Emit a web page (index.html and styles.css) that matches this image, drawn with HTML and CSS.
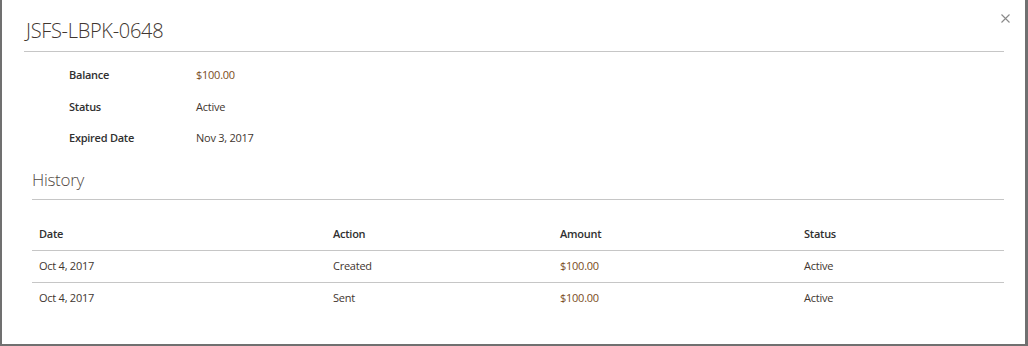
FILE: index.html
```html
<!DOCTYPE html>
<html lang="en">
<head>
    <meta charset="UTF-8">
    <meta name="viewport" content="width=device-width, initial-scale=1.0">
    <title>Gift Card JSFS-LBPK-0648</title>
    <link rel="stylesheet" href="styles.css">
</head>
<body>

<div class="modal">
    <button class="modal-close" type="button" title="Close">
        <svg width="9" height="9" viewBox="0 0 9 9">
            <path d="M0.5 0.5 L8.5 8.5 M8.5 0.5 L0.5 8.5" stroke="#8a8a8a" stroke-width="1.1" fill="none"/>
        </svg>
    </button>

    <h1 class="modal-title">JSFS-LBPK-0648</h1>

    <div class="card-info">
        <div class="info-label">Balance</div>
        <div class="info-value price">$100.00</div>
        <div class="info-label">Status</div>
        <div class="info-value">Active</div>
        <div class="info-label">Expired Date</div>
        <div class="info-value">Nov 3, 2017</div>
    </div>

    <div class="history">
        <h2 class="history-title">History</h2>
        <table class="history-table">
            <colgroup>
                <col style="width: 294px">
                <col style="width: 227px">
                <col style="width: 244px">
                <col>
            </colgroup>
            <thead>
                <tr>
                    <th>Date</th>
                    <th>Action</th>
                    <th>Amount</th>
                    <th>Status</th>
                </tr>
            </thead>
            <tbody>
                <tr>
                    <td>Oct 4, 2017</td>
                    <td>Created</td>
                    <td class="price">$100.00</td>
                    <td>Active</td>
                </tr>
                <tr>
                    <td>Oct 4, 2017</td>
                    <td>Sent</td>
                    <td class="price">$100.00</td>
                    <td>Active</td>
                </tr>
            </tbody>
        </table>
    </div>
</div>

</body>
</html>
```

FILE: styles.css
```css
body {
    margin: 0;
    background-color: #707070;
    font-family: "Open Sans", "Liberation Sans", sans-serif;
    color: #41362f;
}
.modal {
    position: relative;
    box-sizing: border-box;
    height: 344px;
    margin: 0 3px 0 2px;
    padding: 0 21px 0 22px;
    background-color: #fff;
}
.modal-close {
    position: absolute;
    top: 14px;
    right: 15px;
    width: 9px;
    height: 9px;
    padding: 0;
    border: none;
    background: none;
    cursor: pointer;
    line-height: 0;
}
.modal-title {
    margin: 0;
    padding: 17px 0 6px 2px;
    font-size: 20px;
    font-weight: 300;
    line-height: 28px;
    letter-spacing: -0.3px;
    color: #41362f;
    border-bottom: 1px solid #c6c6c6;
}
.card-info {
    display: grid;
    grid-template-columns: 127px 1fr;
    grid-auto-rows: 31.5px;
    align-items: center;
    padding: 7px 0 0 45px;
    font-size: 11px;
    letter-spacing: -0.25px;
}
.info-label {
    font-weight: 600;
    color: #303030;
}
.info-value {
    color: #41362f;
}
.price {
    color: #7a4c1c;
}
.history {
    margin-left: 8px;
}
.history-title {
    margin: 0;
    padding: 13px 0 6px 0;
    font-size: 17px;
    font-weight: 300;
    line-height: 26px;
    letter-spacing: -0.3px;
    color: #514943;
    border-bottom: 1px solid #c6c6c6;
}
.history-table {
    width: 100%;
    margin-top: 19px;
    border-collapse: collapse;
    table-layout: fixed;
    font-size: 11px;
    letter-spacing: -0.25px;
}
.history-table th,
.history-table td {
    height: 30px;
    padding: 0 7px 1px;
    text-align: left;
    line-height: 30px;
}
.history-table th {
    font-weight: 600;
    color: #303030;
    border-bottom: 1px solid #c6c6c6;
}
.history-table tbody tr:first-child td {
    border-bottom: 1px solid #c6c6c6;
}
```
